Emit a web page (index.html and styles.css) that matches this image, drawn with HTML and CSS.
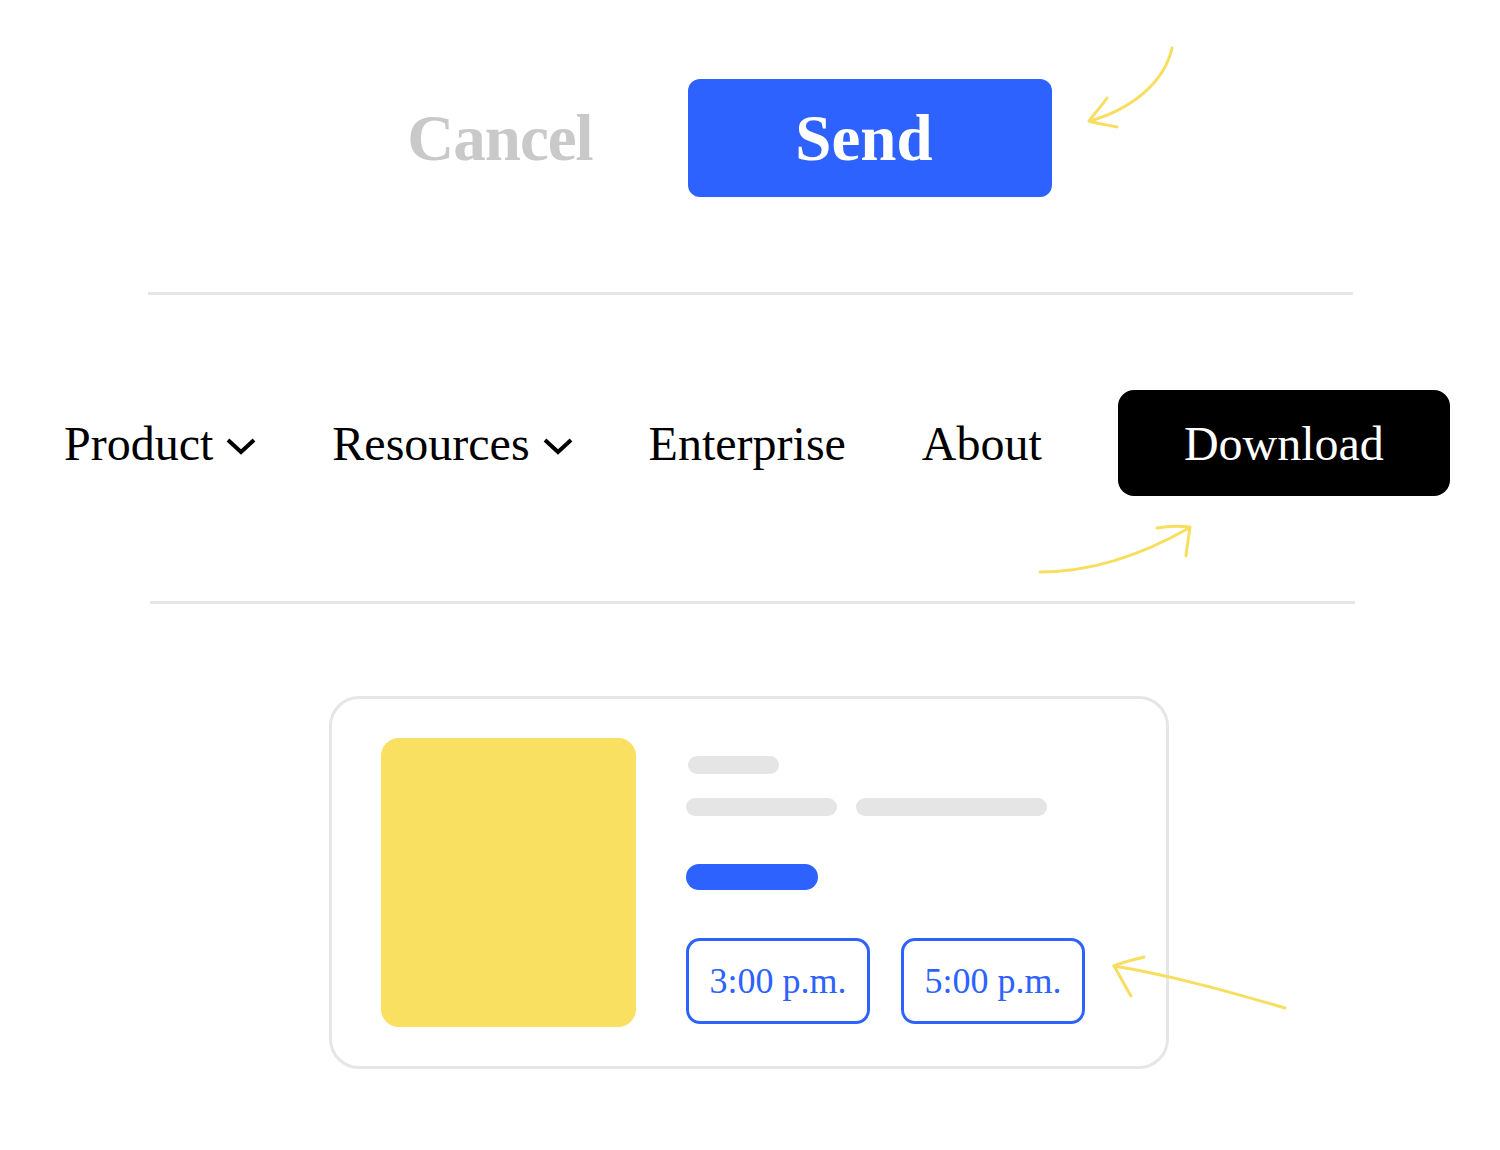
FILE: index.html
```html
<!DOCTYPE html>
<html lang="en">
<head>
    <meta charset="UTF-8">
    <meta name="viewport" content="width=device-width, initial-scale=1.0">
    <title>UI patterns</title>
    <link rel="stylesheet" href="styles.css">
</head>
<body>
    <div class="page">
        <div class="actions">
            <span class="cancel">Cancel</span>
            <button class="send">Send</button>
        </div>

        <div class="divider"></div>

        <nav class="nav">
            <a class="nav-item">Product
                <svg class="chevron" viewBox="0 0 30 17"><path d="M2 2 L15 14 L28 2"/></svg>
            </a>
            <a class="nav-item">Resources
                <svg class="chevron" viewBox="0 0 30 17"><path d="M2 2 L15 14 L28 2"/></svg>
            </a>
            <a class="nav-item">Enterprise</a>
            <a class="nav-item">About</a>
            <button class="download">Download</button>
        </nav>

        <div class="divider second"></div>

        <div class="card">
            <div class="thumb"></div>
            <div class="details">
                <div class="bar short"></div>
                <div class="bar-row">
                    <div class="bar mid"></div>
                    <div class="bar long"></div>
                </div>
                <div class="bar accent"></div>
                <div class="times">
                    <button class="time">3:00 p.m.</button>
                    <button class="time">5:00 p.m.</button>
                </div>
            </div>
        </div>

        <!-- hand-drawn pointers -->
        <svg class="notes" viewBox="0 0 1500 1150">
            <path d="M1172 48 C1165 80 1135 108 1090 121"/>
            <path d="M1107 98 C1100 108 1094 114 1089 121 C1098 124 1108 125 1117 127"/>

            <path d="M1040 572 C1090 572 1140 556 1189 528"/>
            <path d="M1157 528 C1168 526 1180 526 1190 527 C1189 536 1187 546 1186 556"/>

            <path d="M1285 1008 C1230 992 1170 975 1114 966"/>
            <path d="M1144 957 C1133 960 1122 962 1114 966 C1120 976 1125 986 1131 996"/>
        </svg>
    </div>
</body>
</html>
```

FILE: styles.css
```css
* {
    margin: 0;
    padding: 0;
    box-sizing: border-box;
}

body {
    background-color: #ffffff;
    font-family: "Liberation Serif", "Times New Roman", serif;
    color: #000000;
}

.page {
    position: relative;
    width: 1500px;
    height: 1150px;
    overflow: hidden;
}

button {
    border: none;
    font-family: inherit;
    cursor: pointer;
}

/* cancel / send */
.actions {
    display: flex;
    align-items: center;
    padding-top: 79px;
    padding-left: 400px;
}

.cancel {
    width: 200px;
    text-align: center;
    font-size: 65px;
    font-weight: bold;
    color: #c9c9c9;
    letter-spacing: -1px;
}

.send {
    margin-left: 88px;
    width: 364px;
    height: 118px;
    padding-right: 12px;
    border-radius: 12px;
    background-color: #2d62ff;
    color: #ffffff;
    font-size: 65px;
    font-weight: bold;
}

.divider {
    margin-top: 95px;
    margin-left: 148px;
    width: 1205px;
    height: 3px;
    background-color: #e6e6e6;
}

.divider.second {
    margin-top: 105px;
    margin-left: 150px;
}

/* navigation */
.nav {
    display: flex;
    align-items: center;
    margin-top: 95px;
    padding-left: 64px;
    gap: 76px;
}

.nav-item {
    display: flex;
    align-items: center;
    font-size: 48px;
    color: #000000;
}

.chevron {
    width: 30px;
    height: 17px;
    margin-left: 13px;
    margin-top: 6px;
    fill: none;
    stroke: #000000;
    stroke-width: 4;
}

.download {
    width: 332px;
    height: 106px;
    border-radius: 16px;
    background-color: #000000;
    color: #ffffff;
    font-size: 48px;
}

/* booking card */
.card {
    display: flex;
    margin-top: 92px;
    margin-left: 329px;
    width: 840px;
    height: 373px;
    padding: 39px 0 0 49px;
    border: 3px solid #e6e6e6;
    border-radius: 30px;
}

.thumb {
    width: 255px;
    height: 289px;
    border-radius: 18px;
    background-color: #f9e061;
}

.details {
    display: flex;
    flex-direction: column;
    align-items: flex-start;
    margin-left: 50px;
}

.bar {
    height: 18px;
    border-radius: 9px;
    background-color: #e5e5e5;
}

.bar.short {
    width: 91px;
    margin-top: 18px;
    margin-left: 2px;
}

.bar-row {
    display: flex;
    gap: 19px;
    margin-top: 24px;
}

.bar.mid {
    width: 151px;
}

.bar.long {
    width: 191px;
}

.bar.accent {
    width: 132px;
    height: 26px;
    border-radius: 13px;
    margin-top: 48px;
    background-color: #2d62ff;
}

.times {
    display: flex;
    gap: 31px;
    margin-top: 48px;
}

.time {
    width: 184px;
    height: 86px;
    border: 3px solid #2d62ff;
    border-radius: 14px;
    background-color: #ffffff;
    color: #2d62ff;
    font-size: 36px;
}

/* annotation arrows */
.notes {
    position: absolute;
    top: 0;
    left: 0;
    width: 1500px;
    height: 1150px;
    pointer-events: none;
    fill: none;
    stroke: #f8de5f;
    stroke-width: 3;
    stroke-linecap: round;
    stroke-linejoin: round;
}
```
